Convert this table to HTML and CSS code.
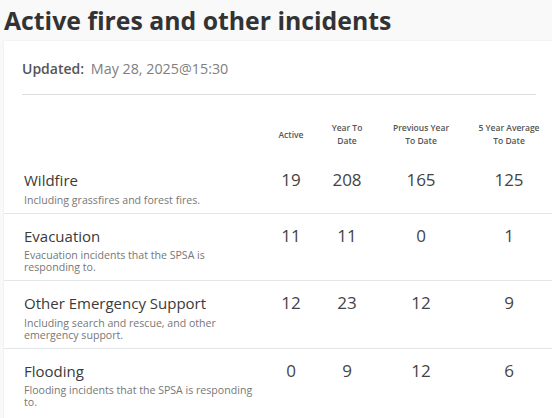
FILE: index.html
```html
<!DOCTYPE html>
<html lang="en">
<head>
<meta charset="utf-8">
<title>Active fires and other incidents</title>
<link rel="stylesheet" href="styles.css">
</head>
<body>
<h1 class="page-title">Active fires and other incidents</h1>
<section class="card">
  <div class="card-head">
    <p class="updated"><span class="updated-label">Updated:</span> <span class="updated-value">May 28, 2025@15:30</span></p>
    <hr class="divider">
  </div>
  <div class="table">
    <div class="row head-row">
      <div class="cell label"></div>
      <div class="cell col-head">Active</div>
      <div class="cell col-head">Year To<br>Date</div>
      <div class="cell col-head">Previous Year<br>To Date</div>
      <div class="cell col-head">5 Year Average<br>To Date</div>
    </div>
    <div class="row data-row">
      <div class="cell label"><div class="name">Wildfire</div><div class="desc">Including grassfires and forest fires.</div></div>
      <div class="cell num">19</div>
      <div class="cell num">208</div>
      <div class="cell num">165</div>
      <div class="cell num">125</div>
    </div>
    <div class="row data-row">
      <div class="cell label"><div class="name">Evacuation</div><div class="desc">Evacuation incidents that the SPSA is responding to.</div></div>
      <div class="cell num">11</div>
      <div class="cell num">11</div>
      <div class="cell num">0</div>
      <div class="cell num">1</div>
    </div>
    <div class="row data-row">
      <div class="cell label"><div class="name">Other Emergency Support</div><div class="desc">Including search and rescue, and other emergency support.</div></div>
      <div class="cell num">12</div>
      <div class="cell num">23</div>
      <div class="cell num">12</div>
      <div class="cell num">9</div>
    </div>
    <div class="row data-row last">
      <div class="cell label"><div class="name">Flooding</div><div class="desc">Flooding incidents that the SPSA is responding to.</div></div>
      <div class="cell num">0</div>
      <div class="cell num">9</div>
      <div class="cell num">12</div>
      <div class="cell num">6</div>
    </div>
  </div>
</section>
</body>
</html>
```

FILE: styles.css
```css
html, body {
  margin: 0;
  padding: 0;
  background: #f9f9f9;
  font-family: "Open Sans", "Liberation Sans", sans-serif;
  color: #333;
  overflow: hidden;
}

.page-title {
  margin: 0;
  padding: 3px 0 0 4px;
  height: 38px;
  font-size: 24.8px;
  line-height: 34px;
  font-weight: 700;
  color: #333;
}

.card {
  margin-left: 4px;
  background: #fff;
  box-shadow: 0 0 2px rgba(0, 0, 0, 0.08);
  min-height: 380px;
}

.card-head {
  padding: 16px 16px 0 18px;
}

.updated {
  margin: 0;
  font-size: 14.3px;
  line-height: 24px;
}

.updated-label {
  font-size: 14px;
  font-weight: 600;
  color: #555;
}

.updated-value {
  color: #808080;
  margin-left: 3px;
}

.divider {
  margin: 13px 0 0;
  border: 0;
  border-top: 1px solid #dedede;
  height: 0;
}

.row {
  display: grid;
  grid-template-columns: 1fr 56px 56px 92px 84px;
  padding: 0 1px 0 20px;
}

.head-row {
  padding-top: 26px;
  padding-bottom: 11px;
  align-items: center;
}

.col-head {
  text-align: center;
  font-size: 8.5px;
  line-height: 13px;
  font-weight: 600;
  color: #555;
}

.data-row {
  padding-top: 11px;
  padding-bottom: 7px;
  border-bottom: 1px solid #e3e7ea;
  align-items: start;
}

.data-row.last {
  border-bottom: 0;
}

.label {
  padding-right: 5px;
}

.name {
  font-size: 15px;
  line-height: 22px;
  font-weight: 400;
  color: #3a3a3a;
}

.desc {
  margin-top: 2.5px;
  font-size: 10.6px;
  line-height: 12px;
  color: #777;
}

.num {
  text-align: center;
  font-size: 17px;
  line-height: 22px;
  color: #444;
}
```
